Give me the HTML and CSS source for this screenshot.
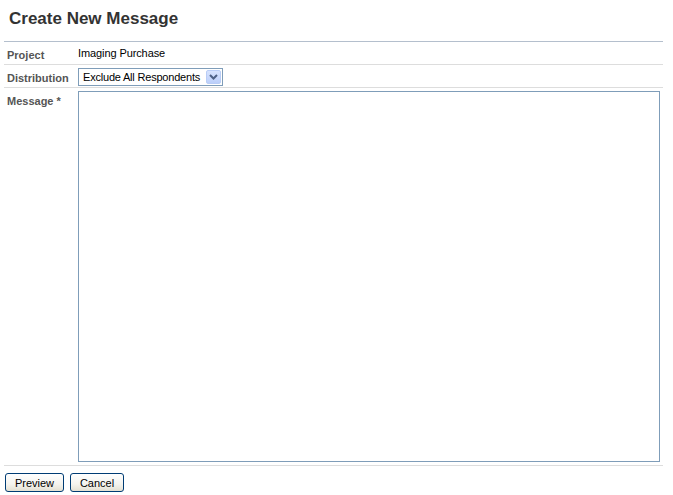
FILE: index.html
```html
<!DOCTYPE html>
<html lang="en">
<head>
  <meta charset="UTF-8" />
  <title>Create New Message</title>
  <link rel="stylesheet" href="styles.css">
</head>
<body>
  <div class="page">
    <h1>Create New Message</h1>

    <form class="message-form">
      <div class="row">
        <label class="label">Project</label>
        <div class="field field-text">Imaging Purchase</div>
      </div>

      <div class="row">
        <label class="label" for="distribution">Distribution</label>
        <div class="field field-select">
          <span class="select-wrap">
            <select id="distribution">
              <option>Exclude All Respondents</option>
            </select>
            <span class="select-arrow">
              <svg width="9" height="6" viewBox="0 0 9 6"><path d="M1 1 L4.5 4.5 L8 1" fill="none" stroke="#4d6185" stroke-width="2"/></svg>
            </span>
          </span>
        </div>
      </div>

      <div class="row">
        <label class="label" for="message">Message *</label>
        <div class="field field-area">
          <textarea id="message"></textarea>
        </div>
      </div>
    </form>

    <div class="actions">
      <button type="button" class="btn btn-preview">Preview</button>
      <button type="button" class="btn btn-cancel">Cancel</button>
    </div>
  </div>
</body>
</html>
```

FILE: styles.css
```css
* {
  box-sizing: border-box;
}

body {
  margin: 0;
  font-family: "Liberation Sans", Arial, sans-serif;
  font-size: 11px;
  color: #000;
  background: #fff;
}

.page {
  padding: 0 10px 0 4px;
}

h1 {
  margin: 0 0 12px;
  padding: 9px 0 0 5px;
  font-size: 17px;
  line-height: 20px;
  font-weight: bold;
  color: #333;
}

.message-form {
  border-top: 1px solid #b4bfcd;
}

.row {
  display: grid;
  grid-template-columns: 74px 1fr;
  border-bottom: 1px solid #dddddd;
}

.label {
  padding: 6px 0 0 3px;
  font-weight: bold;
  line-height: 15px;
  color: #555;
}

.field-text {
  height: 22px;
  padding-top: 4px;
  line-height: 14px;
  letter-spacing: -0.1px;
}

.field-select {
  height: 22px;
  padding-top: 3px;
}

.select-wrap {
  position: relative;
  display: inline-block;
}

select {
  -webkit-appearance: none;
  appearance: none;
  display: block;
  width: 145px;
  height: 18px;
  margin: 0;
  padding: 0 0 0 4px;
  border: 1px solid #7f9db9;
  border-radius: 0;
  background: #fff;
  font-family: "Liberation Sans", Arial, sans-serif;
  font-size: 11px;
  letter-spacing: -0.2px;
  color: #000;
  outline: none;
}

.select-arrow {
  position: absolute;
  top: 2px;
  right: 2px;
  width: 15px;
  height: 14px;
  display: flex;
  align-items: center;
  justify-content: center;
  background: linear-gradient(#d6e3fe, #bccffa);
  border: 1px solid #b9cdf6;
  border-radius: 2px;
  pointer-events: none;
}

.field-area {
  padding: 3px 3px 3px 0;
}

textarea {
  display: block;
  width: 100%;
  height: 371px;
  margin: 0;
  border: 1px solid #7f9db9;
  resize: none;
  font-family: "Liberation Sans", Arial, sans-serif;
  font-size: 11px;
  outline: none;
}

.actions {
  display: flex;
  gap: 6px;
  padding: 7px 0 0 1px;
}

.btn {
  height: 19px;
  padding: 0;
  border: 1px solid #003c74;
  border-radius: 3px;
  background: linear-gradient(#ffffff, #f4f3ee 60%, #e3e0d2);
  font-family: "Liberation Sans", Arial, sans-serif;
  font-size: 11px;
  color: #000;
}

.btn-preview {
  width: 59px;
}

.btn-cancel {
  width: 54px;
}
```
